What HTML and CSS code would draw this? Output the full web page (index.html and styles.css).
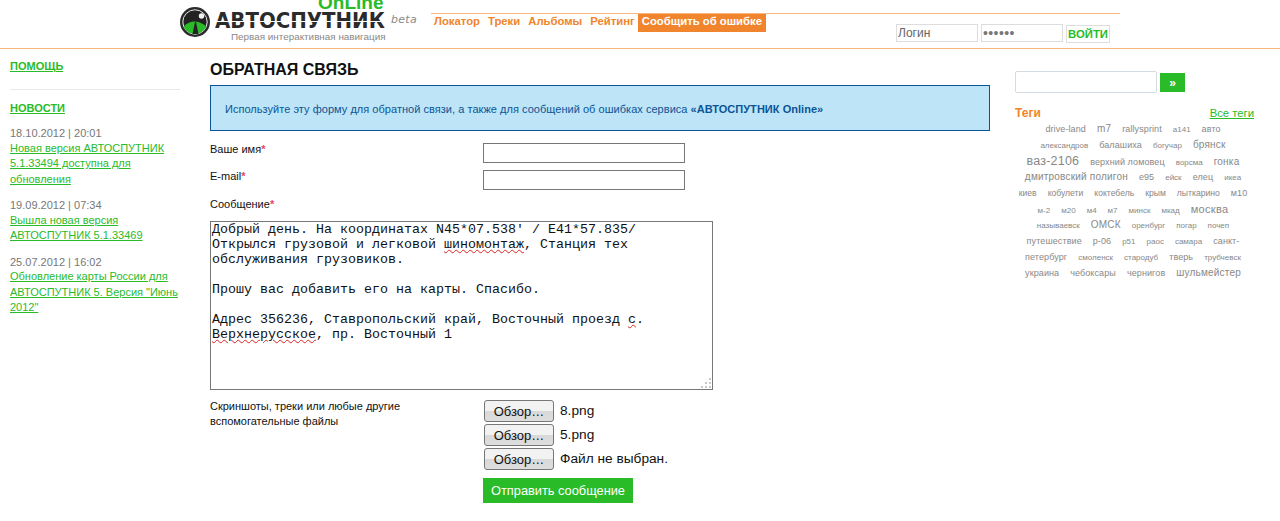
FILE: index.html
```html
<!DOCTYPE html>
<html lang="ru">
<head>
<meta charset="utf-8">
<title>Обратная связь</title>
<link rel="stylesheet" href="styles.css">
</head>
<body>
<header class="topbar">
  <div class="logo">
    <svg class="logo-mark" width="30" height="30" viewBox="0 0 30 30"><circle cx="15" cy="15" r="15" fill="#2b2b2b"/><circle cx="15" cy="15" r="12.2" fill="#222" stroke="#e8e8e8" stroke-width="1"/><path d="M3.6 19.5 Q14 9.5 26.4 19.5 Q22 27 15 27 Q7 27 3.6 19.5Z" fill="#2abb28"/><path d="M12.5 27 L15 15 L16 15 L18.5 27Z" fill="#222"/><circle cx="21.5" cy="9" r="2.7" fill="#f2f2f2"/></svg>
    <div class="logo-online">OnLine</div>
    <div class="logo-name">АВТОСПУТНИК</div>
    <div class="logo-beta">beta</div>
    <div class="logo-sub">Первая интерактивная навигация</div>
  </div>
  <nav class="nav">
    <a class="nav-link">Локатор</a><a class="nav-link">Треки</a><a class="nav-link">Альбомы</a><a class="nav-link">Рейтинг</a><a class="nav-report">Сообщить об ошибке</a>
  </nav>
  <form class="login">
    <input class="login-input" type="text" placeholder="Логин">
    <input class="login-input login-pass" type="password" value="123456">
    <button class="login-btn" type="button">ВОЙТИ</button>
  </form>
</header>
<div class="columns">
  <aside class="left">
    <a class="side-head">ПОМОЩЬ</a>
    <hr class="side-rule">
    <a class="side-head">НОВОСТИ</a>
    <div class="news"><div class="news-date">18.10.2012 | 20:01</div><a class="news-link">Новая версия АВТОСПУТНИК 5.1.33494 доступна для обновления</a></div>
    <div class="news"><div class="news-date">19.09.2012 | 07:34</div><a class="news-link">Вышла новая версия АВТОСПУТНИК 5.1.33469</a></div>
    <div class="news"><div class="news-date">25.07.2012 | 16:02</div><a class="news-link">Обновление карты России для АВТОСПУТНИК 5. Версия "Июнь 2012"</a></div>
  </aside>
  <main class="main">
    <h1 class="title">ОБРАТНАЯ СВЯЗЬ</h1>
    <div class="notice">Используйте эту форму для обратной связи, а также для сообщений об ошибках сервиса <b>«АВТОСПУТНИК Online»</b></div>
    <div class="row row-name"><label class="lbl">Ваше имя<span class="req">*</span></label><input class="field" type="text"></div>
    <div class="row row-mail"><label class="lbl">E-mail<span class="req">*</span></label><input class="field" type="text"></div>
    <label class="lbl lbl-msg">Сообщение<span class="req">*</span></label>
    <div class="msg" role="textbox">Добрый день. На координатах N45*07.538' / E41*57.835/
Открылся грузовой и легковой <span class="typo">шиномонтаж</span>, Станция тех
обслуживания грузовиков.

Прошу вас добавить его на карты. Спасибо.

Адрес 356236, Ставропольский край, Восточный проезд <span class="typo">с</span>.
<span class="typo">Верхнерусское</span>, пр. Восточный 1<svg class="grip" width="12" height="12" viewBox="0 0 12 12"><path d="M9 1h2v2H9zM5 5h2v2H5zM9 5h2v2H9zM1 9h2v2H1zM5 9h2v2H5zM9 9h2v2H9z" fill="#c8c8c8"/></svg></div>
    <div class="files">
      <label class="lbl lbl-files">Скриншоты, треки или любые другие вспомогательные файлы</label>
      <div class="file-list">
        <div class="file"><button class="browse" type="button">Обзор…</button><span>8.png</span></div>
        <div class="file"><button class="browse" type="button">Обзор…</button><span>5.png</span></div>
        <div class="file"><button class="browse" type="button">Обзор…</button><span>Файл не выбран.</span></div>
        <button class="send" type="button">Отправить сообщение</button>
      </div>
    </div>
  </main>
  <aside class="right">
    <div class="search"><input class="search-input" type="text"><button class="search-btn" type="button">»</button></div>
    <div class="tags-head"><span class="tags-title">Теги</span><a class="tags-all">Все теги</a></div>
    <div class="tags">
      <div class="tag-row"><span class="t2">drive-land</span><span class="t3">m7</span><span class="t2">rallysprint</span><span class="t1">a141</span><span class="t2">авто</span></div>
      <div class="tag-row"><span class="t1">александров</span><span class="t2">балашиха</span><span class="t1">богучар</span><span class="t3">брянск</span></div>
      <div class="tag-row"><span class="t5">ваз-2106</span><span class="t2">верхний ломовец</span><span class="t1">ворсма</span><span class="t3">гонка</span></div>
      <div class="tag-row"><span class="t3">дмитровский полигон</span><span class="t2">e95</span><span class="t1">ейск</span><span class="t2">елец</span><span class="t1">икеа</span></div>
      <div class="tag-row"><span class="t1b">киев</span><span class="t1b">кобулети</span><span class="t1b">коктебель</span><span class="t1b">крым</span><span class="t1b">лыткарино</span><span class="t2">м10</span></div>
      <div class="tag-row"><span class="t1">м-2</span><span class="t1">м20</span><span class="t1">м4</span><span class="t1">м7</span><span class="t1">минск</span><span class="t1">мкад</span><span class="t4">москва</span></div>
      <div class="tag-row"><span class="t1">называевск</span><span class="t3">ОМСК</span><span class="t1">оренбург</span><span class="t1">погар</span><span class="t1">почеп</span></div>
      <div class="tag-row"><span class="t2">путешествие</span><span class="t2">р-06</span><span class="t1">р51</span><span class="t1">раос</span><span class="t1">самара</span><span class="t2">санкт-</span></div>
      <div class="tag-row"><span class="t2">петербург</span><span class="t1">смоленск</span><span class="t1">стародуб</span><span class="t2">тверь</span><span class="t1">трубчевск</span></div>
      <div class="tag-row"><span class="t2">украина</span><span class="t2">чебоксары</span><span class="t2">чернигов</span><span class="t3">шульмейстер</span></div>
    </div>
  </aside>
</div>
</body>
</html>
```

FILE: styles.css
```css
html, body { margin: 0; padding: 0; background: #fff; }
body { font: 11px/16px "Liberation Sans", Arial, sans-serif; color: #222; height: 521px; overflow: hidden; }
a { cursor: pointer; }
.topbar { height: 48px; border-bottom: 1px solid #f9b77e; display: flex; position: relative; padding-left: 180px; }
.logo { position: relative; width: 250px; height: 48px; flex: none; }
.logo-mark { position: absolute; left: 0; top: 7px; }
.logo-online { position: absolute; left: 138px; top: -7px; font: bold 19px/19px "Liberation Sans", sans-serif; color: #2abb28; }
.logo-name { position: absolute; left: 35px; top: 9px; font: bold 20.5px/24px "DejaVu Sans", sans-serif; color: #2b2b2b; transform-origin: left top; transform: scaleX(.965); white-space: nowrap; }
.logo-name::after { content: ""; position: absolute; left: 0; right: 0; top: 12px; height: 1px; background: #fff; }
.logo-beta { position: absolute; left: 211px; top: 13px; font: italic 11px/14px "DejaVu Sans", sans-serif; letter-spacing: .3px; color: #8a8a8a; }
.logo-sub { position: absolute; left: 51px; top: 31px; font: 9.9px/12px "Liberation Sans", sans-serif; color: #888; white-space: nowrap; }
.nav { position: absolute; left: 431px; top: 13px; width: 689px; height: 19px; border-top: 1px solid #f9b77e; display: flex; font-weight: bold; font-size: 11.3px; line-height: 15px; padding-left: 3px; box-sizing: border-box; }
.nav-link { color: #f0852d; margin-right: 8px; }
.nav-report { background: #f0852d; color: #fff; padding: 0 4px; height: 18px; margin-left: -5px; }
.login { position: absolute; left: 896px; top: 24px; display: flex; gap: 3px; }
.login-input { width: 82px; height: 18px; box-sizing: border-box; border: 1px solid #ddd; padding: 0 1px; font: 12px "Liberation Sans", sans-serif; color: #666; margin: 0; }
.login-input::placeholder { color: #666; opacity: 1; }
.login-pass { font-size: 14px; letter-spacing: .4px; color: #777; }
.login-btn { width: 44px; height: 18px; margin: 1px 0 0 0; padding: 0; border: 1px solid #ddd; background: #fff; color: #2abb28; font: bold 11.3px "Liberation Sans", sans-serif; }
.columns { display: flex; }
.left { width: 170px; margin-left: 10px; padding-top: 9px; flex: none; }
.side-head { display: block; font-weight: bold; color: #2abb28; text-decoration: underline; line-height: 16px; }
.side-rule { border: 0; border-top: 1px solid #e8e8e8; margin: 15px 0 10px; }
.news { margin-top: 11px; line-height: 15.5px; }
.side-head + .news { margin-top: 10px; }
.news-date { color: #777; line-height: 14.5px; }
.news-link { color: #2abb28; text-decoration: underline; }
.main { width: 503px; margin-left: 30px; flex: none; padding-top: 11px; }
.title { margin: 0; font: bold 16px/20px "Liberation Sans", sans-serif; color: #111; }
.notice { margin-top: 5px; height: 46px; box-sizing: border-box; width: 780px; border: 1px solid #0b5596; background: #bde4f7; color: #0b5596; font-size: 11px; letter-spacing: .003em; padding: 15px 14px; line-height: 16px; }
.lbl { display: block; font-size: 11px; line-height: 15px; color: #111; }
.req { color: #e8436a; font-weight: bold; }
.row { display: flex; }
.row .lbl { width: 273px; flex: none; margin-top: -1px; }
.row-name { margin-top: 12px; }
.row-mail { margin-top: 7px; }
.field { width: 202px; height: 20px; box-sizing: border-box; border: 1px solid #777; margin: 0; padding: 0; }
.lbl-msg { margin-top: 7px; }
.msg { position: relative; white-space: pre-wrap; width: 503px; height: 169px; box-sizing: border-box; margin: 9px 0 0; border: 1px solid #777; padding: 0 1px; font: 13.33px/15px "Liberation Mono", "Courier New", monospace; color: #111; }
.typo { text-decoration: underline wavy #d22; text-decoration-thickness: 1px; }
.grip { position: absolute; right: 0; bottom: 0; }
.files { display: flex; margin-top: 9px; }
.lbl-files { width: 273px; flex: none; box-sizing: border-box; padding-right: 60px; }
.file-list { display: flex; flex-direction: column; align-items: flex-start; margin-top: 1px; }
.file { display: flex; align-items: flex-start; gap: 6px; height: 24px; font-size: 13.7px; line-height: 22px; color: #111; padding-left: 1px; }
.browse { width: 70px; height: 22px; box-sizing: border-box; border: 1px solid #777; border-radius: 3px; background: linear-gradient(#f2f2f2 50%, #d8d8d8 50%, #dedede); font: 13px "Liberation Sans", sans-serif; color: #111; padding: 0; }
.send { margin-top: 6px; height: 25px; width: 150px; border: 0; padding: 0; background: #2abb28; color: #fff; font: 12.8px "Liberation Sans", sans-serif; }
.right { margin-left: 302px; width: 239px; flex: none; padding-top: 22px; }
.search { display: flex; gap: 3px; }
.search-input { width: 142px; height: 22px; box-sizing: border-box; border: 1px solid #d5dbe3; border-radius: 2px; margin: 0; padding: 0; }
.search-btn { width: 25px; height: 19px; margin-top: 2px; border: 0; padding: 0; background: #2abb28; color: #fff; font: bold 12px "Liberation Sans", sans-serif; }
.tags-head { display: flex; justify-content: space-between; align-items: flex-end; margin-top: 12px; font-size: 12px; }
.tags-title { font-weight: bold; color: #f0852d; }
.tags-all { color: #2abb28; text-decoration: underline; font-size: 11.3px; }
.tags { width: 236px; color: #888; margin-top: 0; }
.tag-row { display: flex; justify-content: center; align-items: baseline; column-gap: 11px; height: 16px; line-height: 16px; white-space: nowrap; }
.t1 { font-size: 8px; }
.t1b { font-size: 8.6px; }
.t2 { font-size: 9px; letter-spacing: .1px; }
.t3 { font-size: 10px; letter-spacing: .2px; }
.t4 { font-size: 11px; letter-spacing: .3px; }
.t5 { font-size: 12.5px; letter-spacing: .2px; }
```
